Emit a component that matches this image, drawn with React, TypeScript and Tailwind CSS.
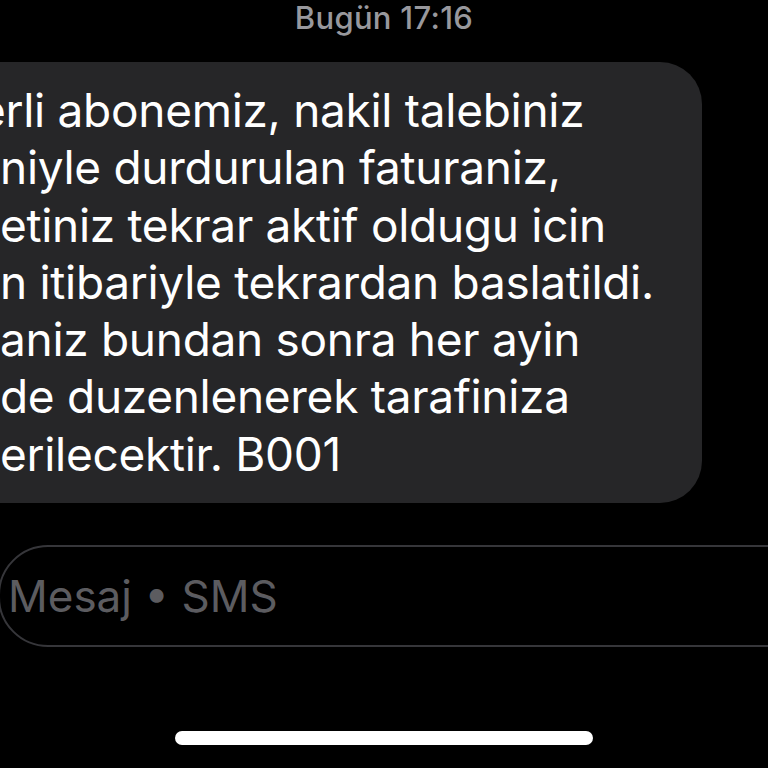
import React from 'react';

const lines = [
    'erli abonemiz, nakil talebiniz',
    'niyle durdurulan faturaniz,',
    'etiniz tekrar aktif oldugu icin',
    'n itibariyle tekrardan baslatildi.',
    'aniz bundan sonra her ayin',
    'de duzenlenerek tarafiniza',
    'erilecektir. B001',
];

export default function App() {
    return (
        <div className="relative flex h-[768px] w-[768px] flex-col overflow-hidden bg-black font-['Inter','Liberation_Sans',sans-serif]">
            {/* Zaman */}
            <div className="h-[36px] text-center text-[31px] leading-[36px] font-medium tracking-[0.3px] text-[#98989d]">
                Bugün 17:16
            </div>

            {/* Gelen mesaj balonu */}
            <div className="mt-[26px] -ml-[40px] w-[742px] rounded-[42px] bg-[#262628] py-[20px] pl-[40px]">
                {lines.map((line, i) => (
                    <div
                        key={i}
                        className={`whitespace-nowrap text-[46px] leading-[57.3px] tracking-[-0.3px] text-white ${i === 0 ? 'indent-[-21px]' : ''}`}
                    >
                        {line}
                    </div>
                ))}
            </div>

            {/* Mesaj alanı */}
            <div className="mt-[42px] -ml-[2px] flex h-[102px] w-[900px] items-center rounded-[50px] border-2 border-[#36363a] pl-[8px]">
                <span className="text-[44px] text-[#5c5c60]">Mesaj • SMS</span>
            </div>

            {/* Ana ekran çubuğu */}
            <div className="mx-auto mt-auto mb-[23px] h-[14px] w-[418px] rounded-full bg-white" />
        </div>
    );
}
